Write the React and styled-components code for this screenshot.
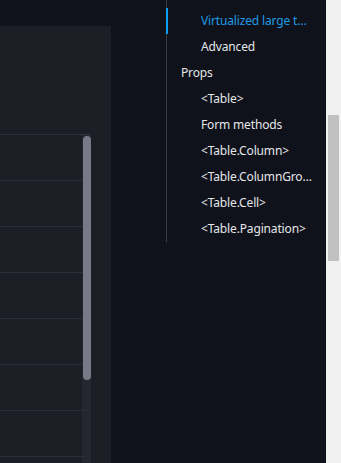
import React from 'react'
import styled, {createGlobalStyle} from 'styled-components'

const tocItems = [
  {label: 'Virtualized large table', level: 2, active: true},
  {label: 'Advanced', level: 2},
  {label: 'Props', level: 1},
  {label: '<Table>', level: 2},
  {label: 'Form methods', level: 2},
  {label: '<Table.Column>', level: 2},
  {label: '<Table.ColumnGroup>', level: 2},
  {label: '<Table.Cell>', level: 2},
  {label: '<Table.Pagination>', level: 2},
]

const rows = Array.from({length: 10}, (_, i) => i)

export default function App() {
  return (
    <>
      <GlobalStyle />
      <Window>
        <Layout>
          <Main>
            <DemoPanel>
              <TableWrap>
                {rows.map(i => <Row key={i} />)}
                <ScrollTrack>
                  <ScrollThumb />
                </ScrollTrack>
              </TableWrap>
            </DemoPanel>
          </Main>
          <Aside>
            <Toc>
              {tocItems.map(item =>
                <TocItem key={item.label} $level={item.level} $active={item.active}>
                  {item.label}
                </TocItem>
              )}
              <ActiveMark />
            </Toc>
          </Aside>
        </Layout>
        <PageScrollbar>
          <PageThumb />
        </PageScrollbar>
      </Window>
    </>
  )
}

const GlobalStyle = createGlobalStyle`
  html, body {
    margin: 0;
    padding: 0;
    background: #0f121a;
    overflow: hidden;
  }
  body {
    font-family: 'Noto Sans', 'Open Sans', sans-serif;
  }
`
const Window = styled.div`
  display: flex;
  height: 463px;
  overflow: hidden;
`
const Layout = styled.div`
  flex: 1;
  display: flex;
  background: #0f121a;
`
const Main = styled.main`
  width: 166px;
  flex-shrink: 0;
  padding-top: 26px;
`
const DemoPanel = styled.div`
  width: 111px;
  height: 100%;
  background: #1b1e25;
  padding-top: 108px;
  box-sizing: border-box;
  overflow: hidden;
`
const TableWrap = styled.div`
  position: relative;
  width: 91px;
  border-top: 1px solid #2e3139;
`
const Row = styled.div`
  height: 45px;
  border-bottom: 1px solid #2c2f37;
`
const ScrollTrack = styled.div`
  position: absolute;
  top: 0;
  right: 0;
  bottom: 0;
  width: 9px;
  background: rgba(40, 43, 52, 0.7);
`
const ScrollThumb = styled.div`
  margin: 1px 0 0 1px;
  width: 8px;
  height: 244px;
  border-radius: 4px;
  background: #777a86;
`
const Aside = styled.aside`
  width: 160px;
`
const Toc = styled.nav`
  position: relative;
  width: 145px;
  padding: 8px 0 0;
  border-left: 1px solid #3a3e47;
  display: flex;
  flex-direction: column;
`
const TocItem = styled.a`
  display: block;
  height: 26px;
  line-height: 26px;
  padding-left: ${p => p.$level === 1 ? 14 : 34}px;
  font-size: 12px;
  letter-spacing: -0.15px;
  color: ${p => p.$active ? '#1f9be6' : '#e4e6ea'};
  white-space: nowrap;
  overflow: hidden;
  text-overflow: ellipsis;
  cursor: pointer;
`
const ActiveMark = styled.span`
  position: absolute;
  left: -1px;
  top: 8px;
  width: 2px;
  height: 26px;
  background: #0f9cf0;
`
const PageScrollbar = styled.div`
  width: 15px;
  flex-shrink: 0;
  background: #f1f1f1;
  padding: 115px 2px 0;
  box-sizing: border-box;
`
const PageThumb = styled.div`
  height: 146px;
  background: #c1c1c1;
`
